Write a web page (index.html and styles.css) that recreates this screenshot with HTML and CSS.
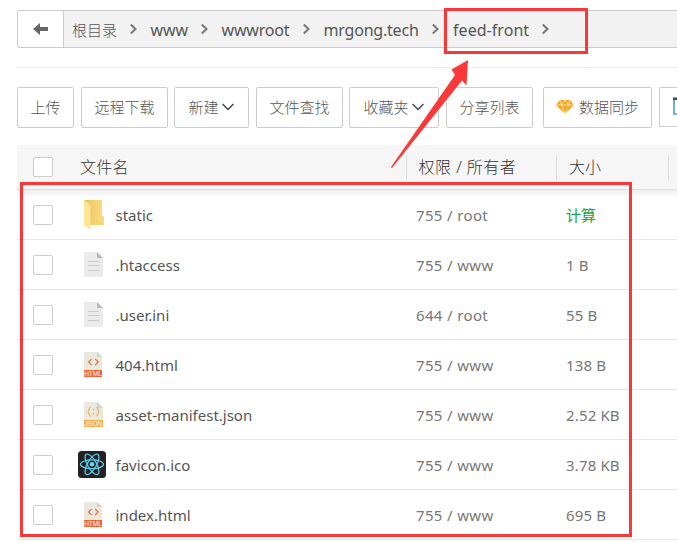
FILE: index.html
```html
<!DOCTYPE html>
<html lang="zh-CN">
<head>
<meta charset="utf-8">
<title>文件</title>
<link rel="stylesheet" href="styles.css">
</head>
<body>
<svg class="defs" width="0" height="0">
  <symbol id="chev" viewBox="0 0 8 12"><path d="M1.8 1.6 6.5 6 1.8 10.4" fill="none" stroke="#777" stroke-width="2"/></symbol>
  <symbol id="down" viewBox="0 0 12 8"><path d="M.6 1 6 6.6 11.4 1" fill="none" stroke="#444" stroke-width="1.4"/></symbol>
  <symbol id="doc" viewBox="0 0 19 25"><path d="M1 0H13L19 6V24a1 1 0 0 1-1 1H1a1 1 0 0 1-1-1V1a1 1 0 0 1 1-1Z" fill="#ebebeb"/><path d="M13 0 19 6H13Z" fill="#b9b9b9"/><path d="M4 9.5H15M4 13.5H15M4 18.5H15" stroke="#c9c9c9" stroke-width="1"/></symbol>
  <symbol id="html" viewBox="0 0 19 25"><path d="M1 0H13L18 5V18H0V1a1 1 0 0 1 1-1Z" fill="#e9e9df"/><path d="M13 0 18 5H13Z" fill="#d2d2c5"/><path d="M0 18H18V25H1a1 1 0 0 1-1-1Z" fill="#ec6630"/><path d="M7.6 7 4.6 10 7.6 13M11.2 7 14.2 10 11.2 13" fill="none" stroke="#ee7444" stroke-width="1.3"/></symbol>
  <symbol id="json" viewBox="0 0 19 25"><path d="M1 0H13L19 6V18H0V1a1 1 0 0 1 1-1Z" fill="#e9e9df"/><path d="M13 0 19 6H13Z" fill="#d2d2c5"/><path d="M0 18H19V25H1a1 1 0 0 1-1-1Z" fill="#f1ad49"/><path d="M6.5 5.5C4.5 5.5 5.5 9.5 3.7 9.8 5.5 10 4.5 14 6.5 14M12.5 5.5C14.5 5.5 13.5 9.5 15.3 9.8 13.5 10 14.5 14 12.5 14M9.5 7V8.6M9.5 10.8V12.4" fill="none" stroke="#efb45c" stroke-width="1.3"/></symbol>
</svg>

<nav class="path">
  <span class="back"><svg width="15" height="12" viewBox="0 0 15 12"><path d="M0 6 7 0V4H15V8H7V12Z" fill="#666"/></svg></span>
  <span class="crumb c1"><span>根目录</span><svg class="chev"><use href="#chev"/></svg></span>
  <span class="crumb c2"><span>www</span><svg class="chev"><use href="#chev"/></svg></span>
  <span class="crumb c3"><span>wwwroot</span><svg class="chev"><use href="#chev"/></svg></span>
  <span class="crumb c4"><span>mrgong.tech</span><svg class="chev"><use href="#chev"/></svg></span>
  <span class="crumb c5"><span>feed-front</span><svg class="chev"><use href="#chev"/></svg></span>
</nav>
<div class="rule"></div>
<div class="tools">
  <span class="btn b1">上传</span>
  <span class="btn b2">远程下载</span>
  <span class="btn b3">新建<svg class="down"><use href="#down"/></svg></span>
  <span class="btn b4">文件查找</span>
  <span class="btn b5">收藏夹<svg class="down"><use href="#down"/></svg></span>
  <span class="btn b6">分享列表</span>
  <span class="btn b7"><svg class="gem" width="18" height="14" viewBox="0 0 18 14"><path d="M4 0H14L18 5 9 14 0 5Z" fill="#fba31c"/><path d="M0 5H18M4 0 5.500 5 9 14 12.500 5 14 0M5.500 5 9 0 12.500 5" fill="none" stroke="#fff0c8" stroke-width=".8"/></svg>数据同步</span>
  <span class="btn b8"><svg width="4" height="18" viewBox="0 0 4 18"><path d="M4 1H1V17H4" fill="#fff" stroke="#4a9fd0" stroke-width="1.6"/><path d="M0 2H4" stroke="#444" stroke-width="2"/></svg></span>
</div>
<div class="table">
  <div class="row head"><span class="box"></span><span class="hname">文件名</span><span class="howner">权限 / 所有者</span><span class="hsize">大小</span><span class="hlast"></span></div>
  <div class="row first"><span class="box"></span><span class="ico"><svg width="20" height="31" viewBox="0 0 20 31"><defs><linearGradient id="g" x1="0" x2="1"><stop offset="0" stop-color="#edc35b"/><stop offset="1" stop-color="#fbdc82"/></linearGradient></defs><path d="M0 1H18V16L20 18V26H6Z" fill="url(#g)"/><path d="M0 1 6.500 6V31L0 26Z" fill="#ffe594"/></svg></span><span class="name">static</span><span class="owner">755 / root</span><span class="size calc">计算</span></div>
  <div class="row"><span class="box"></span><span class="ico"><svg width="19" height="25"><use href="#doc"/></svg></span><span class="name">.htaccess</span><span class="owner">755 / www</span><span class="size">1 B</span></div>
  <div class="row"><span class="box"></span><span class="ico"><svg width="19" height="25"><use href="#doc"/></svg></span><span class="name">.user.ini</span><span class="owner">644 / root</span><span class="size">55 B</span></div>
  <div class="row"><span class="box"></span><span class="ico"><svg width="19" height="25"><use href="#html"/><text x="9" y="24" class="tag">HTML</text></svg></span><span class="name">404.html</span><span class="owner">755 / www</span><span class="size">138 B</span></div>
  <div class="row"><span class="box"></span><span class="ico"><svg width="19" height="25"><use href="#json"/><text x="9.500" y="24" class="tag">JSON</text></svg></span><span class="name">asset-manifest.json</span><span class="owner">755 / www</span><span class="size">2.52 KB</span></div>
  <div class="row"><span class="box"></span><span class="ico react"><svg width="28" height="27" viewBox="0 0 28 27"><rect width="28" height="27" rx="3.5" fill="#222"/><g fill="none" stroke="#5fd0f0" stroke-width="1.2"><ellipse cx="14" cy="13.3" rx="11.6" ry="4.4"/><ellipse cx="14" cy="13.3" rx="11.6" ry="4.4" transform="rotate(60 14 13.3)"/><ellipse cx="14" cy="13.3" rx="11.6" ry="4.4" transform="rotate(120 14 13.3)"/></g><circle cx="14" cy="13.3" r="2.3" fill="#61dafb"/></svg></span><span class="name">favicon.ico</span><span class="owner">755 / www</span><span class="size">3.78 KB</span></div>
  <div class="row"><span class="box"></span><span class="ico"><svg width="19" height="25"><use href="#html"/><text x="9" y="24" class="tag">HTML</text></svg></span><span class="name">index.html</span><span class="owner">755 / www</span><span class="size">695 B</span></div>
</div>
<div class="mark mark-path"></div>
<div class="mark mark-list"></div>
<svg class="arrow" width="90" height="115" viewBox="385 57 90 115"><path d="M468 60 466.500 85.500 462 80.500 392 168 391 167 455 75 451.500 69.500Z" fill="#fb3838"/></svg>
</body>
</html>
```
FILE: styles.css
```css
* { box-sizing: border-box; }
body {
  margin: 0;
  width: 677px;
  height: 543px;
  overflow: hidden;
  position: relative;
  background: #fff;
  color: #555;
  font: 15px "Noto Sans", "Noto Sans CJK SC", sans-serif;
  font-weight: 300;
  white-space: nowrap;
}
svg { display: block; flex: none; }
.defs { position: absolute; }
.tag { font: 400 6.5px "Liberation Sans", sans-serif; fill: #fff; text-anchor: middle; }
.path {
  margin: 10px 0 0 17px;
  height: 38px;
  display: flex;
  border: 1px solid #ccc;
  border-right: 0;
  border-radius: 3px 0 0 3px;
  background: #f2f2f2;
  font-size: 16px;
}
.back {
  width: 46px;
  border-right: 1px solid #ccc;
  border-radius: 2px 0 0 2px;
  background: #fff;
  display: flex;
  align-items: center;
  padding-left: 15px;
  margin-right: 8px;
}
.crumb { display: flex; align-items: center; justify-content: space-between; flex: none; font-weight: 400; padding-top: 1px; }
.crumb .chev { width: 8px; height: 12px; margin-top: -2px; }
.c1 { width: 65px; margin-right: 13.5px; font-size: 15px; font-weight: 300; }
.c2 { width: 57.5px; margin-right: 13.5px; letter-spacing: -.1px; }
.c3 { width: 88.5px; margin-right: 13.5px; letter-spacing: -.2px; }
.c4 { width: 115.5px; margin-right: 14px; letter-spacing: -.2px; }
.c5 { width: 96px; letter-spacing: .05px; }
.rule { margin: 19px 0 0 17px; height: 1px; background: #ebebeb; }
.tools { display: flex; margin: 19px 0 0 17px; height: 41px; }
.btn {
  flex: none;
  height: 41px;
  border: 1px solid #ccc;
  border-radius: 2px;
  display: flex;
  align-items: center;
  justify-content: center;
  margin-right: 6px;
  padding-bottom: 2px;
}
.down { width: 12px; height: 8px; margin: 1px 1px 0 3px; }
.gem { margin: 1px 5px 0 0; }
.b1 { width: 57px; margin-right: 7px; }
.b2 { width: 87px; }
.b3 { width: 75px; margin-right: 7px; }
.b4 { width: 87px; }
.b5 { width: 90px; margin-right: 7px; }
.b6 { width: 87px; margin-right: 10px; }
.b7 { width: 109px; margin-right: 7px; }
.b8 { width: 18px; height: 40px; margin-right: 0; border-right: 0; border-radius: 2px 0 0 2px; justify-content: flex-end; }
.table { margin: 17px 0 0 17px; }
.row { height: 50px; display: flex; align-items: center; border-bottom: 1px solid #e6e6e6; padding-left: 16px; }
.head { height: 45px; background: #f6f6f6; color: #333; font-size: 16px; border-color: #ddd; }
.first { background: linear-gradient(#eee, #fff 8px); }
.box { flex: none; width: 20px; height: 20px; border: 1px solid #ccc; border-radius: 2px; background: #fff; }
.hname { flex: none; width: 326px; margin-left: 27px; letter-spacing: .3px; padding-bottom: 2px; }
.howner, .hsize, .hlast { flex: none; height: 25px; line-height: 24px; border-left: 1px solid #ddd; }
.howner { width: 150px; padding-left: 11.5px; letter-spacing: .5px; }
.hsize { width: 112px; padding-left: 12px; }
.ico { flex: none; width: 32px; margin-left: 31px; }
.react { width: 38px; margin-left: 25px; }
.name { flex: none; width: 300.5px; margin-left: -.5px; font-weight: 400; letter-spacing: 0; }
.owner { flex: none; width: 150px; color: #777; font-weight: 400; letter-spacing: .35px; }
.size { color: #777; font-weight: 400; letter-spacing: .15px; }
.size.calc { color: #20a53a; letter-spacing: 0; }
.mark { position: absolute; border: 3px solid #fb3838; }
.mark-path { left: 444px; top: 8px; width: 144px; height: 46px; }
.mark-list { left: 20px; top: 182px; width: 612px; height: 355px; }
.arrow { position: absolute; left: 385px; top: 57px; }
```
